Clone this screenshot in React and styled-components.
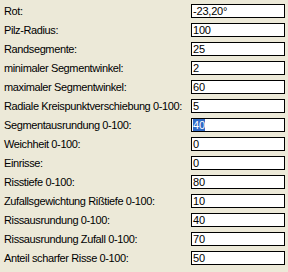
import React from "react";
import styled, { createGlobalStyle } from "styled-components";

const Global = createGlobalStyle`
  html, body {
    margin: 0;
    padding: 0;
    background: #ece9d8;
  }
`;

const Panel = styled.div`
  width: 288px;
  height: 272px;
  box-sizing: border-box;
  padding: 4px 0 0 4px;
  background: #ece9d8;
  display: grid;
  grid-template-columns: 187px 94px;
  grid-auto-rows: 14px;
  row-gap: 5px;
  align-content: start;
  font-family: "Liberation Sans", Arial, sans-serif;
  font-size: 11px;
  color: #000;
`;

const Label = styled.div`
  line-height: 15px;
  letter-spacing: -0.38px;
  white-space: nowrap;
`;

const Field = styled.div`
  box-sizing: border-box;
  height: 14px;
  border: 1px solid #000;
  background: #fff;
  line-height: 12px;
  padding-left: 1px;
  letter-spacing: -0.2px;
  white-space: nowrap;
  overflow: hidden;
`;

const Selected = styled.span`
  background: #316ac5;
  color: #fff;
`;

const rows = [
  ["Rot:", "-23,20°"],
  ["Pilz-Radius:", "100"],
  ["Randsegmente:", "25"],
  ["minimaler Segmentwinkel:", "2"],
  ["maximaler Segmentwinkel:", "60"],
  ["Radiale Kreispunktverschiebung 0-100:", "5"],
  ["Segmentausrundung 0-100:", "40", true],
  ["Weichheit 0-100:", "0"],
  ["Einrisse:", "0"],
  ["Risstiefe 0-100:", "80"],
  ["Zufallsgewichtung Rißtiefe 0-100:", "10"],
  ["Rissausrundung 0-100:", "40"],
  ["Rissausrundung Zufall 0-100:", "70"],
  ["Anteil scharfer Risse 0-100:", "50"],
];

const App = () => (
  <>
    <Global />
    <Panel>
      {rows.map(([label, value, sel]) => (
        <React.Fragment key={label}>
          <Label>{label}</Label>
          <Field>{sel ? <Selected>{value}</Selected> : value}</Field>
        </React.Fragment>
      ))}
    </Panel>
  </>
);

export default App;
